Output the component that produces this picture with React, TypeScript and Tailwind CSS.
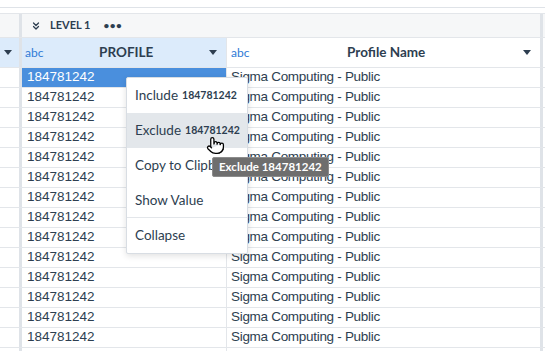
import { ChevronsDown, Pointer } from 'lucide-react';

const ROWS = 15;

function Caret({ className = '' }: { className?: string }) {
  return (
    <svg width="8" height="5" viewBox="0 0 8 5" className={className}>
      <path d="M0 0 H8 L4 5 Z" fill="#2d3e50" />
    </svg>
  );
}

function Divider() {
  return <div className="w-[3px] shrink-0 self-stretch bg-[#dfe3e8]" />;
}

export default function App() {
  return (
    <div className="relative h-[351px] w-[545px] overflow-hidden bg-white font-['Liberation_Sans',sans-serif] text-[#2d3e50]">
      <div className="h-[8px] border-b border-[#dfe3e8]" />
      <div className="h-[6px] border-b border-[#e3e6ea]" />

      {/* level bar */}
      <div className="flex h-[24px] border-b border-[#e3e6ea] bg-[#f6f7f8]">
        <div className="w-[19px] shrink-0" />
        <Divider />
        <div className="flex w-[518px] items-center pl-[8px] font-['Lato',sans-serif]">
          <ChevronsDown className="h-[12px] w-[12px]" strokeWidth={2.5} />
          <span className="ml-[8px] text-[11px] font-bold">LEVEL 1</span>
          <span className="ml-[13px] text-[10px] font-bold tracking-[0.5px]">•••</span>
        </div>
        <Divider />
      </div>

      {/* column headers */}
      <div className="flex h-[30px] border-b border-[#e3e6ea] font-['Lato',sans-serif]">
        <div className="flex w-[19px] shrink-0 items-center bg-[#dcebfb] pl-[4px]">
          <Caret />
        </div>
        <Divider />
        <div className="flex w-[205px] shrink-0 items-center border-r border-[#e3e6ea] bg-[#dcebfb] pl-[3px] pr-[9px]">
          <span className="text-[12px] text-[#2f7ad6]">abc</span>
          <span className="flex-1 text-center text-[13.5px] font-bold">PROFILE</span>
          <Caret />
        </div>
        <div className="flex w-[313px] shrink-0 items-center pl-[4px] pr-[9px]">
          <span className="text-[12px] text-[#2f7ad6]">abc</span>
          <span className="flex-1 text-center text-[13.5px] font-bold">Profile Name</span>
          <Caret />
        </div>
        <Divider />
      </div>

      {/* data rows */}
      {Array.from({ length: ROWS }).map((_, i) => (
        <div key={i} className="flex h-[20px] border-b border-[#e3e6ea] text-[13.5px]">
          <div className="w-[19px] shrink-0" />
          <Divider />
          <div
            className={
              i === 0
                ? 'flex w-[205px] shrink-0 items-center border-r border-[#e3e6ea] bg-[#4a8fdd] pl-[5px] text-white'
                : 'flex w-[205px] shrink-0 items-center border-r border-[#e3e6ea] pl-[5px]'
            }
          >
            184781242
          </div>
          <div className="flex w-[313px] shrink-0 items-center pl-[4px] tracking-[-0.3px]">Sigma Computing - Public</div>
          <Divider />
        </div>
      ))}

      {/* context menu */}
      <div className="absolute left-[126px] top-[77px] w-[122px] overflow-hidden rounded-[2px] border border-[#d8dde3] bg-white font-['Lato',sans-serif] text-[13.5px] shadow-[0_2px_6px_rgba(0,0,0,0.12)]">
        <div className="flex h-[35px] items-center whitespace-nowrap pl-[8px]">
          Include <span className="ml-[4px] text-[10.5px] font-bold">184781242</span>
        </div>
        <div className="flex h-[35px] items-center whitespace-nowrap bg-[#e3e7eb] pl-[8px]">
          Exclude <span className="ml-[4px] text-[10.5px] font-bold">184781242</span>
        </div>
        <div className="flex h-[35px] items-center whitespace-nowrap pl-[8px]">Copy to Clipboard</div>
        <div className="flex h-[35px] items-center whitespace-nowrap border-b border-[#e3e6ea] pl-[8px]">Show Value</div>
        <div className="flex h-[35px] items-center whitespace-nowrap pl-[8px]">Collapse</div>
      </div>

      {/* tooltip */}
      <div className="absolute left-[212px] top-[157px] flex h-[20px] items-center rounded-[2px] border border-[#8c8c8c] bg-[#6e6e6e] px-[6px] font-['Lato',sans-serif] text-[11.5px] font-bold text-white">
        Exclude 184781242
      </div>

      {/* cursor */}
      <Pointer
        className="absolute left-[206px] top-[136px] h-[19px] w-[19px]"
        fill="white"
        stroke="black"
        strokeWidth={1.6}
      />
    </div>
  );
}
